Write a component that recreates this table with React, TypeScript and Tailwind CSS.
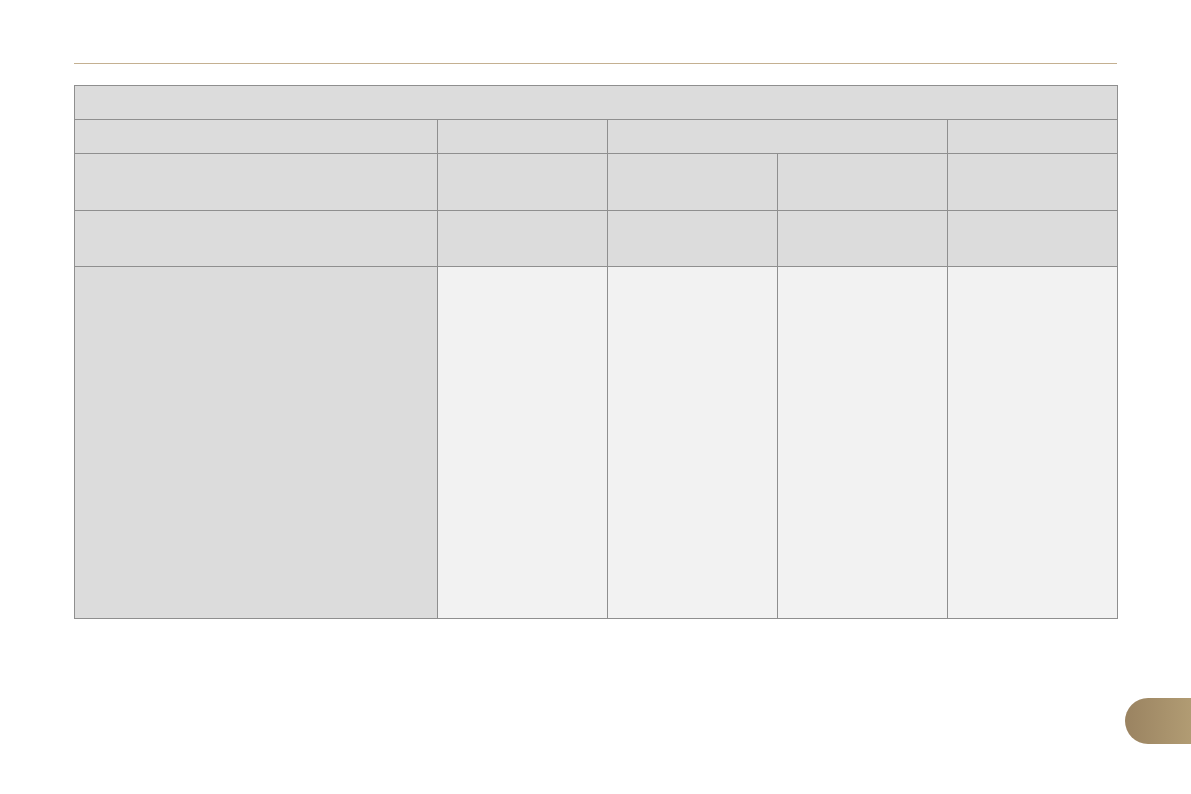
const cell = "border border-[#8f8f8f] bg-[#dcdcdc] p-0";
const light = "border border-[#8f8f8f] bg-[#f2f2f2] p-0";

export default function App() {
  return (
    <div className="relative h-[794px] w-[1191px] overflow-hidden bg-white font-['Liberation_Sans',sans-serif]">
      <div className="ml-[74px] pt-[63px]">
        <div className="h-px w-[1043px] bg-[#c4b091]" />
        <table className="mt-[21px] w-[1044px] table-fixed border-collapse">
          <colgroup>
            <col className="w-[363px]" />
            <col className="w-[170px]" />
            <col className="w-[170px]" />
            <col className="w-[170px]" />
            <col className="w-[170px]" />
          </colgroup>
          <tbody>
            <tr className="h-[34px]">
              <td colSpan={5} className={cell} />
            </tr>
            <tr className="h-[34px]">
              <td className={cell} />
              <td className={cell} />
              <td colSpan={2} className={cell} />
              <td className={cell} />
            </tr>
            <tr className="h-[57px]">
              <td className={cell} />
              <td className={cell} />
              <td className={cell} />
              <td className={cell} />
              <td className={cell} />
            </tr>
            <tr className="h-[56px]">
              <td className={cell} />
              <td className={cell} />
              <td className={cell} />
              <td className={cell} />
              <td className={cell} />
            </tr>
            <tr className="h-[352px]">
              <td className={cell} />
              <td className={light} />
              <td className={light} />
              <td className={light} />
              <td className={light} />
            </tr>
          </tbody>
        </table>
      </div>
      {/* chapter tab */}
      <div className="absolute left-[1125px] top-[698px] h-[46px] w-[80px] rounded-l-[23px] bg-gradient-to-r from-[#9a8361] to-[#b6a177]" />
    </div>
  );
}
